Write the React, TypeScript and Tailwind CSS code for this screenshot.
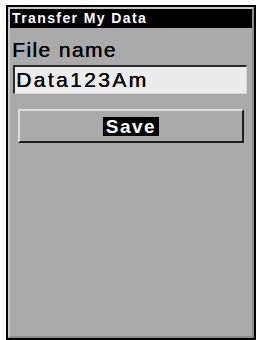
import React from 'react';

const App: React.FC = () => {
  return (
    <div className="w-[259px] h-[340px] bg-white pt-[5px] pl-[6px]" style={{ fontFamily: '"Liberation Sans", Arial, sans-serif' }}>
      <div className="w-[250px] h-[335px] border-2 border-black bg-[#aaaaaa]">
        <div className="h-full border-2 border-[#c8c8c8] border-r-[#8c8c8c] border-b-[#8c8c8c] flex flex-col">
          <div className="h-[19px] bg-black text-white font-bold text-[14px] leading-[19px] pl-[2px] tracking-[1.4px]">
            Transfer My Data
          </div>
          <div className="pl-[2px] mt-[11px] text-[21px] leading-[21px] tracking-[1.4px] text-black [text-shadow:0.4px_0_0_#000]">
            File name
          </div>
          <div className="ml-[3px] mr-[5px] mt-[5px] h-[29px] bg-[#ececec] border-t-2 border-l-2 border-[#2a2a2a] border-r border-b border-r-[#d8d8d8] border-b-[#d8d8d8] text-[21px] leading-[25px] pl-[1px] tracking-[2.4px] text-black [text-shadow:0.4px_0_0_#000]">
            Data123Am
          </div>
          <div className="mx-[8px] mt-[15px] h-[34px] border-t-2 border-l-2 border-[#dcdcdc] border-r-2 border-b-2 border-r-[#1e1e1e] border-b-[#1e1e1e] flex items-center justify-center">
            <span className="bg-black text-white font-bold text-[19px] leading-[19px] px-[3px] tracking-[1.5px]">Save</span>
          </div>
        </div>
      </div>
    </div>
  );
};

export default App;
